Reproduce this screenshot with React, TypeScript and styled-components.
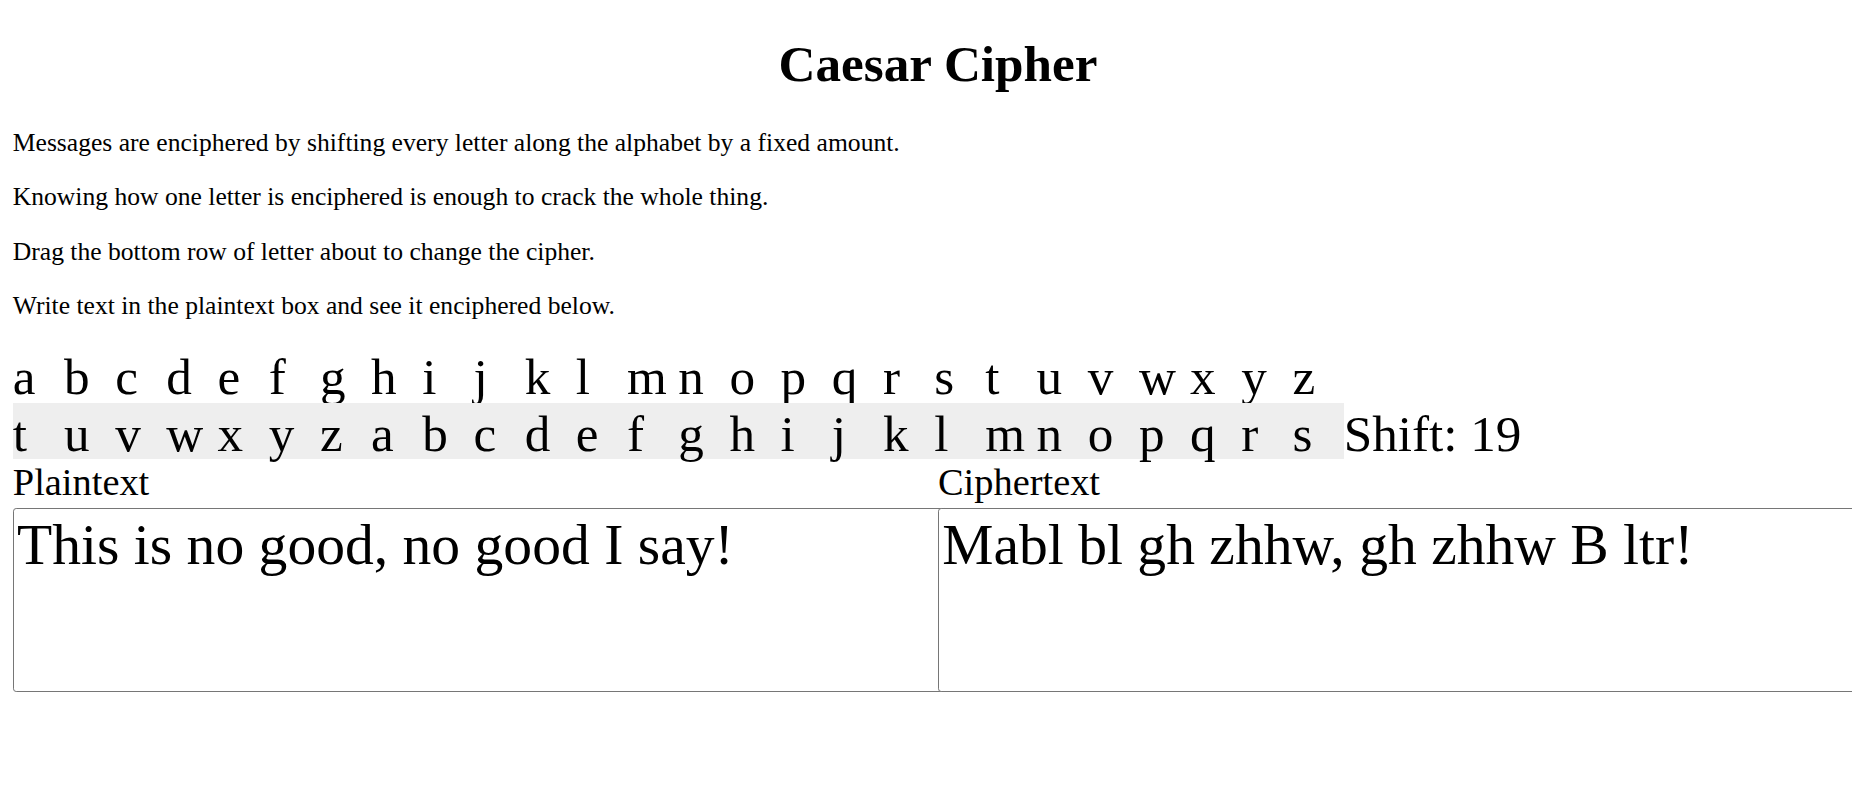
import React, { useState } from "react";
import styled, { createGlobalStyle } from "styled-components";

const ALPHABET = "abcdefghijklmnopqrstuvwxyz".split("");

function encipher(text: string, shift: number) {
    return text.replace(/[a-z]/gi, (ch) => {
        const base = ch === ch.toUpperCase() ? 65 : 97;
        return String.fromCharCode(((ch.charCodeAt(0) - base + shift) % 26) + base);
    });
}

export default function App() {
    const [shift] = useState(19);
    const [plain, setPlain] = useState("This is no good, no good I say!");

    return (
        <>
            <GlobalStyle />
            <Page>
                <Title>Caesar Cipher</Title>
                <Para>Messages are enciphered by shifting every letter along the alphabet by a fixed amount.</Para>
                <Para>Knowing how one letter is enciphered is enough to crack the whole thing.</Para>
                <Para>Drag the bottom row of letter about to change the cipher.</Para>
                <Para>Write text in the plaintext box and see it enciphered below.</Para>

                <LetterRow $height={57.5} $pad={5.5}>
                    {ALPHABET.map((l) => (
                        <Letter key={l}>{l}</Letter>
                    ))}
                </LetterRow>
                <CipherLine>
                    <LetterRow $height={55.5} $pad={4.7} $shaded>
                        {ALPHABET.map((_, i) => (
                            <Letter key={i}>{ALPHABET[(i + shift) % 26]}</Letter>
                        ))}
                    </LetterRow>
                    <Shift>Shift: {shift}</Shift>
                </CipherLine>

                <Columns>
                    <Column>
                        <Label>Plaintext</Label>
                        <TextBox value={plain} onChange={(e) => setPlain(e.target.value)} />
                    </Column>
                    <Column>
                        <Label>Ciphertext</Label>
                        <TextBox value={encipher(plain, shift)} readOnly />
                    </Column>
                </Columns>
            </Page>
        </>
    );
}

const GlobalStyle = createGlobalStyle`
    html, body {
        overflow: hidden;
    }
    body {
        margin: 0;
        background: #fff;
        color: #000;
        font-family: "Liberation Serif", "Times New Roman", serif;
        font-size: 25.6px;
    }
`;

const Page = styled.div`
    width: 1850.4px;
    padding: 0 12.8px;
`;

const Title = styled.h1`
    margin: 34.3px 0;
    font-size: 51.2px;
    line-height: 59px;
    font-weight: bold;
    text-align: center;
`;

const Para = styled.p`
    margin: 25.6px 0;
    font-size: 25.6px;
    line-height: 29px;
`;

const CipherLine = styled.div`
    display: flex;
    align-items: flex-start;
    white-space: nowrap;
`;

const LetterRow = styled.div<{ $height: number; $pad: number; $shaded?: boolean }>`
    display: flex;
    width: fit-content;
    box-sizing: border-box;
    height: ${(p) => p.$height}px;
    padding-top: ${(p) => p.$pad}px;
    background: ${(p) => (p.$shaded ? "#eeeeee" : "transparent")};
`;

const Letter = styled.span`
    display: block;
    width: 51.2px;
    font-size: 51.2px;
    line-height: 51.2px;
`;

const Shift = styled.span`
    font-size: 51.2px;
    line-height: 51.2px;
    padding-top: 4.7px;
`;

const Columns = styled.div`
    display: grid;
    grid-template-columns: 1fr 1fr;
    margin-top: 0.5px;
`;

const Column = styled.div`
    display: flex;
    flex-direction: column;
    min-width: 0;
`;

const Label = styled.div`
    font-size: 38.4px;
    line-height: 44px;
    margin-bottom: 4px;
`;

const TextBox = styled.textarea`
    box-sizing: border-box;
    width: calc(100% + 9.6px);
    height: 184px;
    margin: 0;
    padding: 3.2px;
    border: 1.6px solid #767676;
    border-radius: 3.2px;
    background: #fff;
    color: #000;
    font-family: "Liberation Serif", "Times New Roman", serif;
    font-size: 57.6px;
    resize: none;
    outline: none;
`;
